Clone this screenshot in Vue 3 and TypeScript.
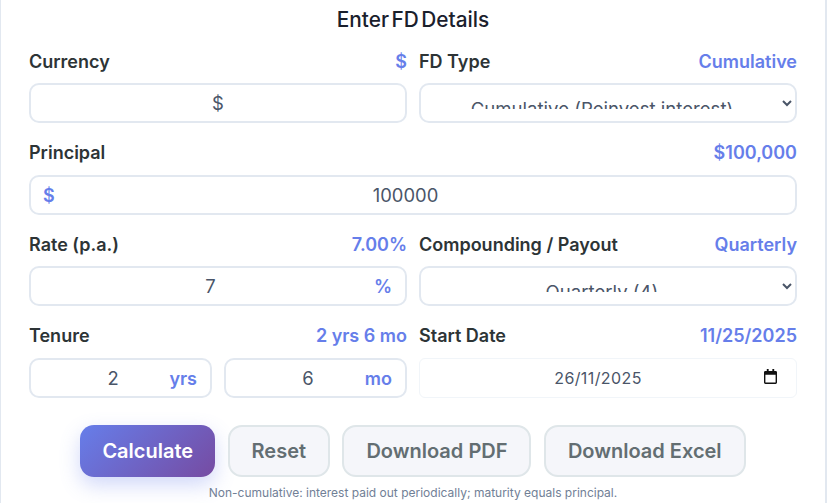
<script setup lang="ts">
import { ref } from 'vue'

const currency = ref('$')
const fdType = ref('cumulative')
const principal = ref(100000)
const rate = ref(7)
const compounding = ref('4')
const years = ref(2)
const months = ref(6)
const startDate = ref('26/11/2025')
</script>

<template>
  <div class="card">
    <h2 class="title">Enter FD Details</h2>
    <div class="form">
      <div class="field">
        <div class="label-row"><label>Currency</label><span class="val">$</span></div>
        <input v-model="currency" class="ctl" type="text" />
      </div>
      <div class="field">
        <div class="label-row"><label>FD Type</label><span class="val">Cumulative</span></div>
        <select v-model="fdType" class="ctl sel">
          <option value="cumulative">Cumulative (Reinvest interest)</option>
          <option value="payout">Non-cumulative (Payout)</option>
        </select>
      </div>
      <div class="field wide">
        <div class="label-row"><label>Principal</label><span class="val">$100,000</span></div>
        <div class="wrap">
          <span class="prefix">$</span>
          <input v-model="principal" class="ctl" type="number" />
        </div>
      </div>
      <div class="field">
        <div class="label-row"><label>Rate (p.a.)</label><span class="val">7.00%</span></div>
        <div class="wrap">
          <input v-model="rate" class="ctl" type="number" />
          <span class="suffix">%</span>
        </div>
      </div>
      <div class="field">
        <div class="label-row"><label>Compounding / Payout</label><span class="val">Quarterly</span></div>
        <select v-model="compounding" class="ctl sel">
          <option value="12">Monthly (12)</option>
          <option value="4">Quarterly (4)</option>
          <option value="1">Yearly (1)</option>
        </select>
      </div>
      <div class="field">
        <div class="label-row"><label>Tenure</label><span class="val">2 yrs 6 mo</span></div>
        <div class="pair">
          <div class="wrap">
            <input v-model="years" class="ctl" type="number" />
            <span class="suffix">yrs</span>
          </div>
          <div class="wrap">
            <input v-model="months" class="ctl" type="number" />
            <span class="suffix">mo</span>
          </div>
        </div>
      </div>
      <div class="field">
        <div class="label-row"><label>Start Date</label><span class="val">11/25/2025</span></div>
        <div class="wrap">
          <input v-model="startDate" class="ctl date" type="text" />
          <svg class="cal" width="13" height="15" viewBox="0 0 14 16" preserveAspectRatio="none" aria-hidden="true">
            <path d="M3 0h2v2h4V0h2v2h1.500A1.500 1.500 0 0 1 14 3.500v11a1.500 1.500 0 0 1-1.500 1.500h-11A1.500 1.500 0 0 1 0 14.500v-11A1.500 1.500 0 0 1 1.500 2H3zM1.500 6v8.500h11V6z" fill="#111" fill-rule="evenodd" />
          </svg>
        </div>
      </div>
    </div>
    <div class="actions">
      <button class="btn primary" type="button">Calculate</button>
      <button class="btn" type="button">Reset</button>
      <button class="btn" type="button">Download PDF</button>
      <button class="btn" type="button">Download Excel</button>
    </div>
    <p class="note">Non-cumulative: interest paid out periodically; maturity equals principal.</p>
  </div>
</template>

<style>
html, body { margin: 0; background: #fff; overflow: hidden; }
</style>

<style scoped>
.card {
  box-sizing: border-box;
  width: 827px;
  height: 503px;
  overflow: hidden;
  padding: 0 28px;
  background: #fff;
  border-left: 1px solid #e2e8f0;
  border-right: 2px solid #e2e8f0;
  font-family: Inter, sans-serif;
  color: #2d3436;
}
.title {
  margin: 0;
  padding-top: 8px;
  height: 49px;
  box-sizing: border-box;
  text-align: center;
  font-size: 20.8px;
  line-height: 24px;
  font-weight: 500;
  word-spacing: -3px;
  color: #1a202c;
}
.form {
  display: grid;
  grid-template-columns: 1fr 1fr;
  column-gap: 12px;
  row-gap: 17.5px;
}
.wide { grid-column: 1 / -1; }
.field { min-width: 0; }
.label-row {
  display: flex;
  justify-content: space-between;
  align-items: center;
  height: 24px;
  margin-bottom: 10px;
  font-size: 18px;
  font-weight: 600;
}
.val { color: #667eea; font-weight: 600; }
.ctl {
  display: block;
  box-sizing: border-box;
  width: 100%;
  height: 40px;
  padding: 12px 16px;
  border: 2px solid #e2e8f0;
  border-radius: 10px;
  background: #fff;
  font-family: inherit;
  font-size: 18.4px;
  color: #4a5568;
  text-align: center;
  outline: none;
}
.sel { text-align: center; font-size: 18.6px; }
.date {
  border: 1px solid #f1f5f9;
  border-radius: 6px;
  padding-right: 36px;
  font-size: 16px;
  letter-spacing: 0.4px;
}
.cal {
  position: absolute;
  top: 11px;
  right: 20px;
}
.wrap { position: relative; flex: 1; min-width: 0; }
.prefix, .suffix {
  position: absolute;
  top: 50%;
  transform: translateY(-50%);
  color: #667eea;
  font-size: 18px;
  font-weight: 600;
}
.prefix { left: 14px; }
.suffix { right: 15px; }
.pair { display: flex; gap: 12px; }
.actions {
  display: flex;
  justify-content: center;
  gap: 12.4px;
  margin-top: 27.5px;
}
.btn {
  box-sizing: border-box;
  height: 52px;
  padding: 0 22px;
  border: 2.5px solid #dfe6e9;
  border-radius: 14px;
  background: #f5f6fa;
  color: #636e72;
  font-family: inherit;
  font-size: 20px;
  font-weight: 600;
}
.primary {
  border: 0;
  color: #fff;
  background: linear-gradient(135deg, #667eea 0%, #764ba2 100%);
  box-shadow: 0 8px 20px rgba(102, 126, 234, 0.3);
}
.note {
  margin: 8px 0 0;
  text-align: center;
  font-size: 12px;
  line-height: 15px;
  color: #718096;
}
</style>
